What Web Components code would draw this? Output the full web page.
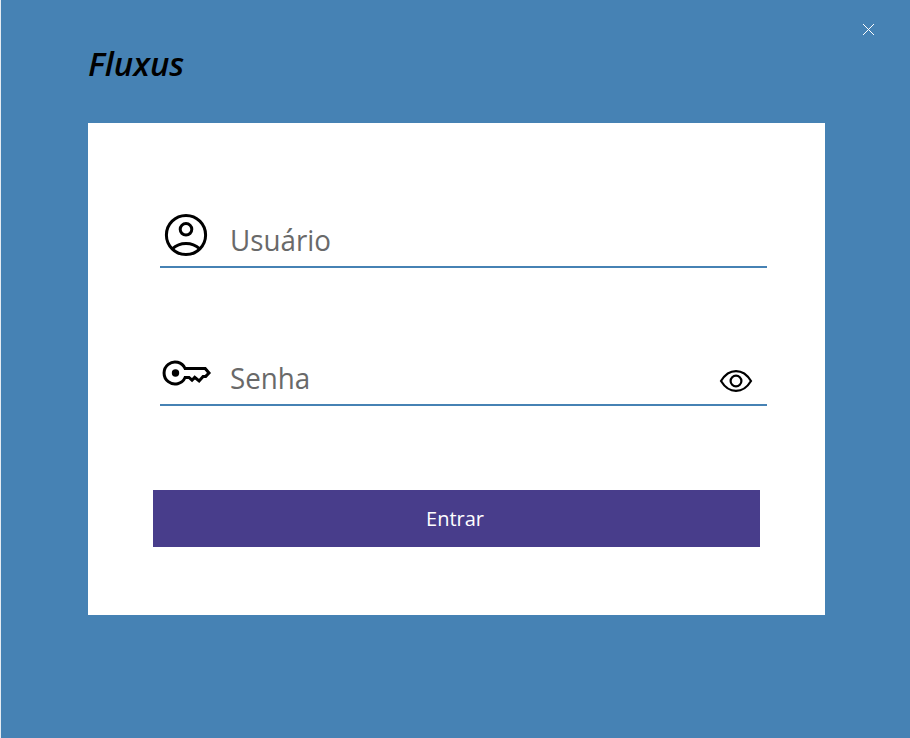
<!DOCTYPE html>
<html lang="pt-BR">
<head>
<meta charset="utf-8">
<title>Fluxus</title>
<style>
html,body{margin:0;height:100%}
body{overflow:hidden;font-family:"Noto Sans","Open Sans",sans-serif}
</style>
</head>
<body>
<login-window>
  <brand-name slot="brand">Fluxus</brand-name>
  <login-field icon="user">Usuário</login-field>
  <login-field icon="key" reveal>Senha</login-field>
  <login-button slot="action">Entrar</login-button>
</login-window>
<script>
const icons = {
  user: `<svg width="44" height="44" viewBox="0 0 44 44" style="margin:7px 0 0 4px"><g fill="none" stroke="#000" stroke-width="3"><circle cx="22" cy="22" r="19.6"/><circle cx="22" cy="16.3" r="5.8"/><path d="M8.3 35.8C16 28.8 28 28.8 35.7 35.8"/></g></svg>`,
  key: `<svg width="52" height="30" viewBox="0 0 52 30" style="margin:14px 0 0 2px"><g fill="none" stroke="#000" stroke-width="3"><path d="M22.6 10.5A11 11 0 1 0 22.6 19.5H26.5L29.5 22.2L32.2 19.4L36.6 23L40.6 18.4H43.2L46.5 15L42.7 10.5Z" transform="translate(.5 0)"/></g><circle cx="13.5" cy="15" r="3.7"/></svg>`
};
class LoginWindow extends HTMLElement {
  constructor() {
    super();
    this.attachShadow({mode:'open'}).innerHTML = `<style>
      :host{display:flex;flex-direction:column;box-sizing:border-box;width:910px;height:738px;background:#4682b4;border-left:1px solid #e4ebf2;padding:0 85px 0 87px}
      header{height:123px;display:flex;justify-content:space-between;align-items:flex-start;flex:none}
      .close{width:11px;height:11px;margin:24px -49px 0 0}
      main{box-sizing:border-box;height:492px;background:#fff;padding:83px 58px 0 65px;display:flex;flex-direction:column}
      .fields{display:grid;gap:76px;padding-left:7px}
      .action{margin:84px 7px 0 0}
    </style>
    <header><slot name="brand"></slot><svg class="close" viewBox="0 0 11 11"><path d="M0 0l11 11M11 0l-11 11" stroke="#fff" fill="none" stroke-width="1"/></svg></header>
    <main><div class="fields"><slot></slot></div><div class="action"><slot name="action"></slot></div></main>`;
  }
}
class BrandName extends HTMLElement {
  constructor() {
    super();
    this.attachShadow({mode:'open'}).innerHTML = `<style>
      :host{display:block;margin-top:42px;color:#000;font:italic 600 33px/44px "Open Sans",sans-serif}
    </style><slot></slot>`;
  }
}
class LoginField extends HTMLElement {
  constructor() {
    super();
    this.attachShadow({mode:'open'}).innerHTML = `<style>
      :host{display:grid;grid-template-columns:70px 1fr auto;box-sizing:border-box;height:62px;border-bottom:2px solid #4682b4;color:#696969}
      svg{display:block}
      .label{font:29px/40px "Open Sans",sans-serif;padding-top:14px;transform:scaleX(.957);transform-origin:0 50%}
      .eye{margin:25px 14px 0 0}
    </style>
    <div>${icons[this.getAttribute('icon')] || ''}</div>
    <div class="label"><slot></slot></div>
    ${this.hasAttribute('reveal') ? `<svg class="eye" width="34" height="24" viewBox="0 0 34 24"><g fill="none" stroke="#000" stroke-width="2.2"><path d="M2 12C10-1.2 24-1.2 32 12C24 25.2 10 25.2 2 12Z"/><circle cx="17" cy="12" r="5.4"/></g></svg>` : ''}`;
  }
}
class LoginButton extends HTMLElement {
  constructor() {
    super();
    this.attachShadow({mode:'open'}).innerHTML = `<style>
      :host{display:block}
      button{width:100%;height:57px;border:0;padding:1px 3px 1px 0;background:#483d8b;color:#fff;font:20px/28px "Open Sans",sans-serif;display:block}
    </style><button><slot></slot></button>`;
  }
}
customElements.define('login-window', LoginWindow);
customElements.define('brand-name', BrandName);
customElements.define('login-field', LoginField);
customElements.define('login-button', LoginButton);
</script>
</body>
</html>
